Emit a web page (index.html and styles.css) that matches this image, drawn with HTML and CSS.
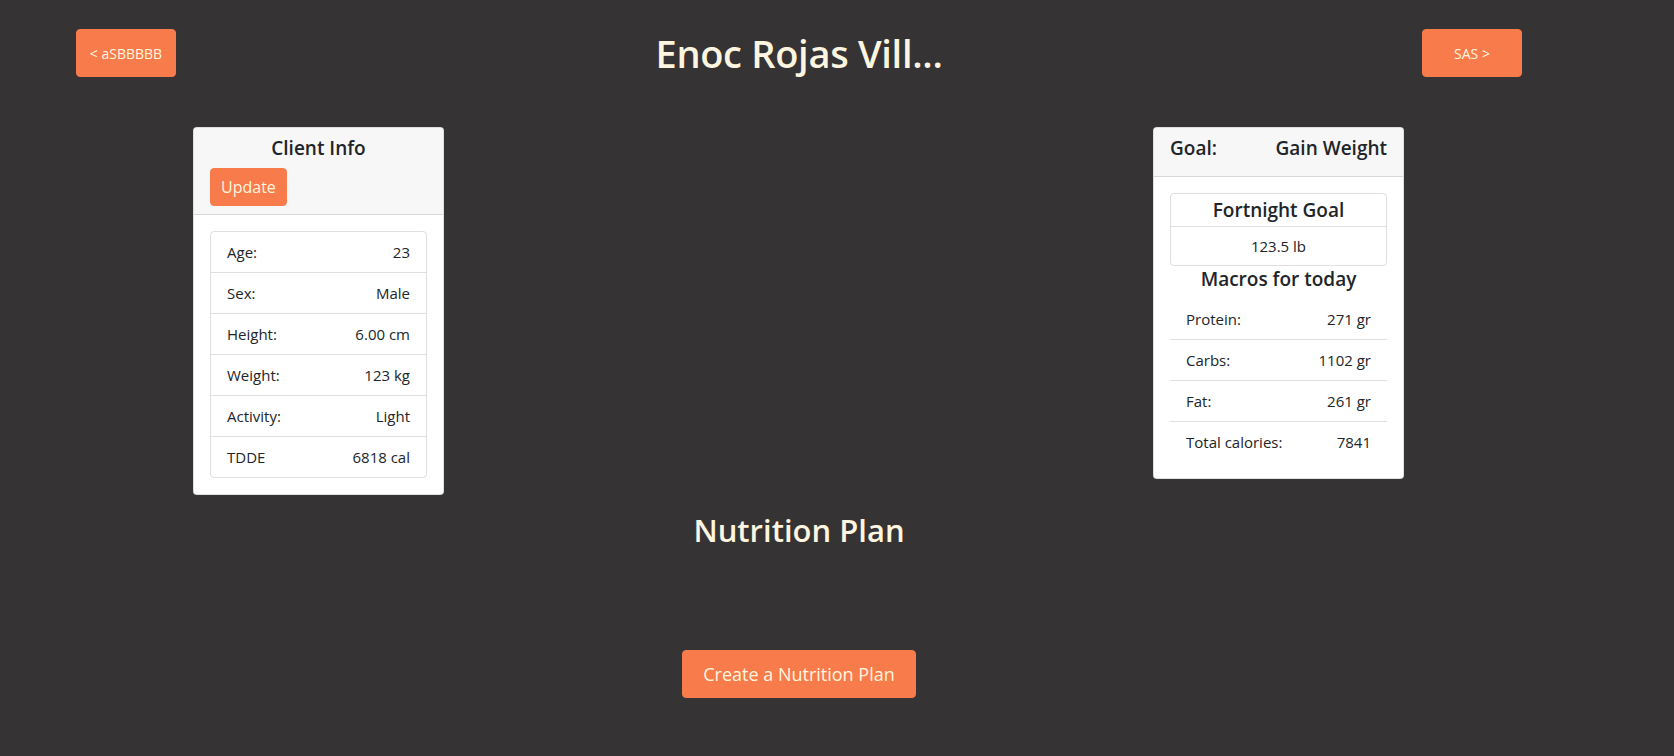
FILE: index.html
```html
<!DOCTYPE html>
<html lang="en">
<head>
<meta charset="utf-8">
<title>Enoc Rojas Vill...</title>
<link rel="stylesheet" href="styles.css">
</head>
<body>
<div class="page">
  <header class="topbar">
    <button class="btn nav-btn">&lt; aSBBBBB</button>
    <h1 class="title">Enoc Rojas Vill...</h1>
    <button class="btn nav-btn">SAS &gt;</button>
  </header>

  <section class="cards">
    <div class="card">
      <div class="card-header">
        <h5 class="card-title center">Client Info</h5>
        <button class="btn btn-update">Update</button>
      </div>
      <div class="card-body">
        <ul class="list-group">
          <li class="list-item"><span>Age:</span><span>23</span></li>
          <li class="list-item"><span>Sex:</span><span>Male</span></li>
          <li class="list-item"><span>Height:</span><span>6.00 cm</span></li>
          <li class="list-item"><span>Weight:</span><span>123 kg</span></li>
          <li class="list-item"><span>Activity:</span><span>Light</span></li>
          <li class="list-item"><span>TDDE</span><span>6818 cal</span></li>
        </ul>
      </div>
    </div>

    <div class="card">
      <div class="card-header goal-header">
        <h5 class="card-title">Goal:</h5>
        <h5 class="card-title">Gain Weight</h5>
      </div>
      <div class="card-body">
        <div class="sub-card">
          <div class="sub-card-header">Fortnight Goal</div>
          <div class="sub-card-body">123.5 lb</div>
        </div>
        <h5 class="macros-title">Macros for today</h5>
        <div class="macros">
          <div class="macro-row"><span>Protein:</span><span>271 gr</span></div>
          <div class="macro-row"><span>Carbs:</span><span>1102 gr</span></div>
          <div class="macro-row"><span>Fat:</span><span>261 gr</span></div>
          <div class="macro-row"><span>Total calories:</span><span>7841</span></div>
        </div>
      </div>
    </div>
  </section>

  <h2 class="plan-title">Nutrition Plan</h2>
  <div class="plan-actions">
    <button class="btn btn-lg">Create a Nutrition Plan</button>
  </div>
</div>
</body>
</html>
```

FILE: styles.css
```css
html, body {
  margin: 0;
  padding: 0;
  background: #353334;
}

body {
  font-family: "Open Sans", "Noto Sans", "DejaVu Sans", sans-serif;
  font-size: 16px;
  line-height: 1.5;
  color: #212529;
}

.page {
  width: 1598px;
}

.btn {
  font-family: inherit;
  background: #f87b4c;
  color: #fff6df;
  border: 1px solid #f87b4c;
  border-radius: 4px;
  cursor: pointer;
  white-space: nowrap;
}

.topbar {
  display: flex;
  justify-content: space-between;
  align-items: center;
  padding: 29px 76px 0;
}

.nav-btn {
  width: 100px;
  height: 48px;
  font-size: 14px;
  padding: 0;
}

.title {
  margin: 0;
  font-size: 38px;
  font-weight: 600;
  line-height: 48px;
  color: #fdf5e0;
  letter-spacing: -0.3px;
}

.cards {
  display: flex;
  justify-content: space-between;
  align-items: flex-start;
  margin-top: 50px;
  padding: 0 194px 0 193px;
}

.card {
  width: 251px;
  box-sizing: border-box;
  background: #fff;
  border: 1px solid rgba(0, 0, 0, 0.125);
  border-radius: 4px;
  overflow: hidden;
}

.card-header {
  background: #f7f7f7;
  border-bottom: 1px solid rgba(0, 0, 0, 0.125);
  padding: 8px 16px;
}

.card-title {
  margin: 0 0 8px;
  font-size: 19px;
  font-weight: 600;
  line-height: 24px;
  color: #212529;
}

.center {
  text-align: center;
}

.btn-update {
  font-size: 16px;
  line-height: 24px;
  padding: 6px 10px;
}

.goal-header {
  display: flex;
  justify-content: space-between;
  padding-bottom: 8px;
}

.card-body {
  padding: 16px;
}

.list-group {
  list-style: none;
  margin: 0;
  padding: 0;
  border: 1px solid rgba(0, 0, 0, 0.125);
  border-radius: 4px;
}

.list-item {
  display: flex;
  justify-content: space-between;
  padding: 8px 16px;
  font-size: 15px;
  line-height: 24px;
}

.list-item + .list-item {
  border-top: 1px solid rgba(0, 0, 0, 0.125);
}

.sub-card {
  border: 1px solid rgba(0, 0, 0, 0.125);
  border-radius: 4px;
}

.sub-card-header {
  padding: 4px;
  text-align: center;
  font-size: 19px;
  font-weight: 600;
  line-height: 24px;
  border-bottom: 1px solid rgba(0, 0, 0, 0.125);
}

.sub-card-body {
  padding: 7px 8px;
  text-align: center;
  font-size: 15px;
  line-height: 24px;
}

.macros-title {
  margin: 1px 0 8px;
  text-align: center;
  font-size: 19px;
  font-weight: 600;
  line-height: 24px;
}

.macro-row {
  display: flex;
  justify-content: space-between;
  padding: 8px 16px;
  font-size: 15px;
  line-height: 24px;
}

.macro-row + .macro-row {
  border-top: 1px solid rgba(0, 0, 0, 0.125);
}

.plan-title {
  margin: 16px 0 0;
  text-align: center;
  font-size: 31px;
  font-weight: 600;
  line-height: 38px;
  color: #fdf5e0;
}

.plan-actions {
  display: flex;
  justify-content: center;
  margin-top: 101px;
}

.btn-lg {
  font-size: 18px;
  line-height: 30px;
  padding: 8px 0;
  width: 234px;
}
```
